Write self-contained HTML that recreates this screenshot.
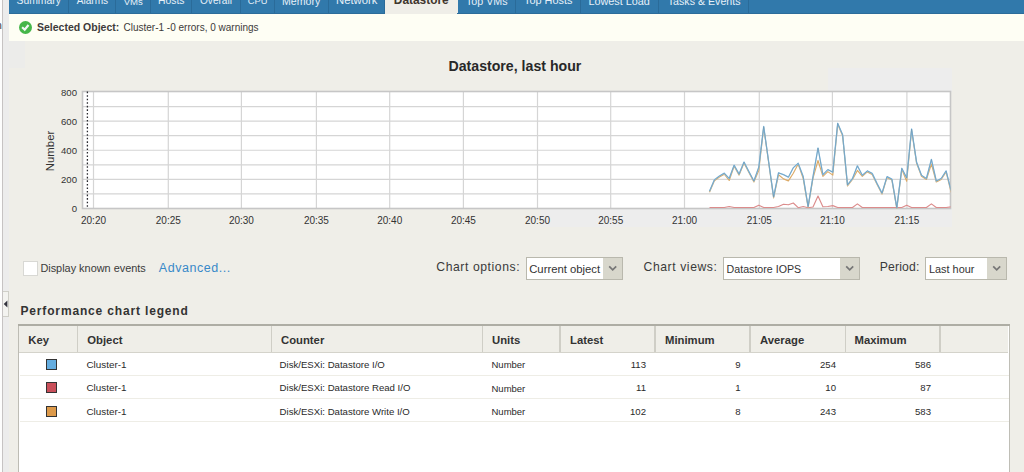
<!DOCTYPE html>
<html><head><meta charset="utf-8">
<style>
html,body{margin:0;padding:0;}
body{width:1024px;height:472px;overflow:hidden;position:relative;background:#efeee8;font-family:"Liberation Sans",sans-serif;color:#333;}
.a{position:absolute;white-space:nowrap;line-height:1;}
#lstrip{position:absolute;left:0;top:0;width:9px;height:472px;background:#ececec;}
#lw{position:absolute;left:0;top:0;width:2px;height:472px;background:#fdfdfd;}
#lline{position:absolute;left:2px;top:0;width:1px;height:472px;background:#c6c3c3;}
#tabbar{position:absolute;left:9px;top:0;width:1015px;height:14px;background:#3179ab;}
.tb2{position:absolute;top:13px;height:1px;background:#2c6c9a;}
.tab{position:absolute;top:0;height:14px;border-right:1px solid #2a6b99;box-sizing:border-box;}
.tab.sel{background:#efeee8;border-right:none;}
.tabt{position:absolute;top:-5.3px;font-size:10.5px;color:#e6f0f8;line-height:1;white-space:nowrap;}
.tabt.selt{font-weight:bold;color:#40362e;font-size:11.9px;top:-5.4px;}
#notif{position:absolute;left:9px;top:14px;width:1015px;height:27px;background:#fefef4;}
#check{position:absolute;left:19px;top:20.7px;width:13px;height:13px;border-radius:50%;background:#46b64a;}
.th{font-size:11.3px;font-weight:bold;color:#333;top:334.5px;}
.td{font-size:9.9px;color:#2a2a2a;}
</style></head><body>
<div id="lstrip"></div><div id="lw"></div><div id="lline"></div>
<div class="a" style="left:-4.3px;top:19.8px;font-size:11px;color:#3a3f4a">n</div>
<div id="tabbar"></div>
<div class="tab" style="left:9px;width:60.1px"></div><div class="tabt" style="left:16.5px;font-size:10.4px;top:-4.10px">Summary</div><div class="tab" style="left:68.6px;width:47.4px"></div><div class="tabt" style="left:76.7px;font-size:10.1px;top:-3.85px">Alarms</div><div class="tab" style="left:115.5px;width:35.6px"></div><div class="tabt" style="left:123.7px;font-size:9.6px;top:-3.43px">VMs</div><div class="tab" style="left:150.6px;width:41.9px"></div><div class="tabt" style="left:158px;font-size:10.4px;top:-4.10px">Hosts</div><div class="tab" style="left:192px;width:48.5px"></div><div class="tabt" style="left:200px;font-size:10.1px;top:-3.85px">Overall</div><div class="tab" style="left:240px;width:34.9px"></div><div class="tabt" style="left:247.8px;font-size:9.3px;top:-3.17px">CPU</div><div class="tab" style="left:274.4px;width:54.4px"></div><div class="tabt" style="left:282px;font-size:10.6px;top:-4.27px">Memory</div><div class="tab" style="left:328.3px;width:56.7px"></div><div class="tabt" style="left:336px;font-size:11.3px;top:-4.87px">Network</div><div class="tab sel" style="left:384.5px;width:73.0px"></div><div class="tabt selt" style="left:393.8px">Datastore</div><div class="tab" style="left:457px;width:59.1px"></div><div class="tabt" style="left:466px;font-size:10.7px;top:-4.36px">Top VMs</div><div class="tab" style="left:515.6px;width:65.5px"></div><div class="tabt" style="left:524px;font-size:10.9px;top:-4.53px">Top Hosts</div><div class="tab" style="left:580.6px;width:78.7px"></div><div class="tabt" style="left:588.4px;font-size:10.85px;top:-4.48px">Lowest Load</div><div class="tab" style="left:658.8px;width:90.1px"></div><div class="tabt" style="left:667.8px;font-size:10.65px;top:-4.32px">Tasks &amp; Events</div>
<div class="tb2" style="left:9px;width:375.5px"></div>
<div class="tb2" style="left:457px;width:567px"></div>
<div id="notif"></div>
<div style="position:absolute;left:9px;top:41px;width:15.5px;height:27px;background:#ececea"></div>
<div id="check"><svg width="13" height="13" viewBox="0 0 13 13" style="position:absolute;left:0;top:0"><path d="M3.1 6.3 L5.7 8.6 L9.5 4.0" fill="none" stroke="#f4f6f8" stroke-width="2.2"/></svg></div>
<div class="a" style="left:37px;top:22px;font-size:10.5px;font-weight:bold;color:#3d3a3a">Selected Object:</div>
<div class="a" style="left:123.5px;top:22.7px;font-size:10px;color:#3d3a3a">Cluster-1 -0 errors, 0 warnings</div>

<div class="a" style="left:448.5px;top:58.7px;font-size:14.15px;font-weight:bold;color:#282828">Datastore, last hour</div>
<div style="position:absolute;left:827.5px;top:68px;width:124.5px;height:24px;background:#ededed"></div>
<div style="position:absolute;left:541px;top:209px;width:411px;height:18px;background:#ededed"></div>

<svg width="1024" height="472" style="position:absolute;left:0;top:0" font-family="Liberation Sans">
<rect x="82.5" y="91.5" width="868" height="117" fill="#fff"/>
<g stroke="#d5d5d5" stroke-width="1.2"><line x1="82.5" x2="950.5" y1="106.56" y2="106.56"/><line x1="82.5" x2="950.5" y1="121.12" y2="121.12"/><line x1="82.5" x2="950.5" y1="135.69" y2="135.69"/><line x1="82.5" x2="950.5" y1="150.25" y2="150.25"/><line x1="82.5" x2="950.5" y1="164.81" y2="164.81"/><line x1="82.5" x2="950.5" y1="179.38" y2="179.38"/><line x1="82.5" x2="950.5" y1="193.94" y2="193.94"/><line x1="93.50" x2="93.50" y1="92" y2="208.5"/><line x1="168.30" x2="168.30" y1="92" y2="208.5"/><line x1="241.40" x2="241.40" y1="92" y2="208.5"/><line x1="316.40" x2="316.40" y1="92" y2="208.5"/><line x1="389.70" x2="389.70" y1="92" y2="208.5"/><line x1="463.40" x2="463.40" y1="92" y2="208.5"/><line x1="537.50" x2="537.50" y1="92" y2="208.5"/><line x1="610.70" x2="610.70" y1="92" y2="208.5"/><line x1="684.50" x2="684.50" y1="92" y2="208.5"/><line x1="759.30" x2="759.30" y1="92" y2="208.5"/><line x1="832.40" x2="832.40" y1="92" y2="208.5"/><line x1="906.90" x2="906.90" y1="92" y2="208.5"/></g>
<rect x="82.5" y="91.5" width="868" height="117" fill="none" stroke="#c6c6c6" stroke-width="1.6"/>
<line x1="87.4" x2="87.4" y1="91.6" y2="208" stroke="#2a2a30" stroke-width="1.3" stroke-dasharray="1.6,1.95"/>
<defs><clipPath id="pc"><rect x="82.5" y="91.5" width="868" height="117"/></clipPath></defs>
<g clip-path="url(#pc)" fill="none" stroke-width="1.15" stroke-linejoin="round">
<polyline points="709.5,207.5 714.4,207.5 719.4,207.5 724.3,207.5 729.2,206.5 734.1,207.5 739.1,207.5 744.0,207.5 748.9,207.5 753.9,207.5 758.8,205.2 763.7,207.5 768.7,207.5 773.6,207.5 778.5,206.5 783.5,204.3 788.4,204.8 793.3,203.0 798.2,207.7 803.2,206.5 808.1,207.7 813.0,207.0 818.0,196.0 822.9,206.8 827.8,206.5 832.8,205.6 837.7,207.5 842.6,207.5 847.5,207.5 852.5,207.5 857.4,203.9 862.3,207.5 867.3,207.5 872.2,207.5 877.1,207.5 882.0,207.5 887.0,207.5 891.9,207.5 896.8,207.5 901.8,207.5 906.7,205.2 911.6,207.5 916.6,207.5 921.5,207.5 926.4,207.5 931.4,203.9 936.3,207.5 941.2,207.5 946.1,207.5 951.1,206.8" stroke="#dc8c8c"/>
<polyline points="709.5,192.2 714.4,180.8 719.4,177.0 724.3,174.2 729.2,180.5 734.1,166.2 739.1,175.1 744.0,163.0 748.9,172.6 753.9,182.0 758.8,170.4 763.7,127.5 768.7,163.0 773.6,197.9 778.5,174.8 783.5,178.9 788.4,180.9 793.3,173.2 798.2,164.1 803.2,178.6 808.1,207.3 813.0,178.1 818.0,160.5 822.9,176.4 827.8,171.6 832.8,175.1 837.7,124.3 842.6,135.7 847.5,185.9 852.5,179.5 857.4,170.4 862.3,176.3 867.3,171.9 872.2,174.4 877.1,184.6 882.0,194.1 887.0,177.6 891.9,180.1 896.8,208.7 901.8,169.3 906.7,181.2 911.6,130.0 916.6,163.3 921.5,176.3 926.4,179.5 931.4,164.0 936.3,182.0 941.2,179.5 946.1,171.9 951.1,192.3" stroke="#dcaa66" stroke-width="1.15"/>
<polyline points="709.5,191.2 714.4,179.8 719.4,176.0 724.3,173.2 729.2,178.5 734.1,165.2 739.1,174.1 744.0,162.0 748.9,171.6 753.9,181.0 758.8,167.1 763.7,126.5 768.7,162.0 773.6,196.9 778.5,172.8 783.5,174.7 788.4,177.2 793.3,167.7 798.2,163.3 803.2,176.6 808.1,206.5 813.0,176.6 818.0,148.0 822.9,174.7 827.8,169.6 832.8,172.2 837.7,123.3 842.6,134.7 847.5,184.9 852.5,178.5 857.4,165.8 862.3,175.3 867.3,170.9 872.2,173.4 877.1,183.6 882.0,193.1 887.0,176.6 891.9,179.1 896.8,207.7 901.8,168.3 906.7,177.9 911.6,129.0 916.6,162.3 921.5,175.3 926.4,178.5 931.4,159.4 936.3,181.0 941.2,178.5 946.1,170.9 951.1,190.6" stroke="#8cc6ec" stroke-width="1.35"/>
<polyline points="709.5,191.2 714.4,179.8 719.4,176.0 724.3,173.2 729.2,178.5 734.1,165.2 739.1,174.1 744.0,162.0 748.9,171.6 753.9,181.0 758.8,167.1 763.7,126.5 768.7,162.0 773.6,196.9 778.5,172.8 783.5,174.7 788.4,177.2 793.3,167.7 798.2,163.3 803.2,176.6 808.1,206.5 813.0,176.6 818.0,148.0 822.9,174.7 827.8,169.6 832.8,172.2 837.7,123.3 842.6,134.7 847.5,184.9 852.5,178.5 857.4,165.8 862.3,175.3 867.3,170.9 872.2,173.4 877.1,183.6 882.0,193.1 887.0,176.6 891.9,179.1 896.8,207.7 901.8,168.3 906.7,177.9 911.6,129.0 916.6,162.3 921.5,175.3 926.4,178.5 931.4,159.4 936.3,181.0 941.2,178.5 946.1,170.9 951.1,190.6" stroke="#6a8fa8" stroke-width="0.6"/>
</g>
<g font-size="10" fill="#333"><text x="93.50" y="223.5" text-anchor="middle">20:20</text><text x="168.30" y="223.5" text-anchor="middle">20:25</text><text x="241.40" y="223.5" text-anchor="middle">20:30</text><text x="316.40" y="223.5" text-anchor="middle">20:35</text><text x="389.70" y="223.5" text-anchor="middle">20:40</text><text x="463.40" y="223.5" text-anchor="middle">20:45</text><text x="537.50" y="223.5" text-anchor="middle">20:50</text><text x="610.70" y="223.5" text-anchor="middle">20:55</text><text x="684.50" y="223.5" text-anchor="middle">21:00</text><text x="759.30" y="223.5" text-anchor="middle">21:05</text><text x="832.40" y="223.5" text-anchor="middle">21:10</text><text x="906.90" y="223.5" text-anchor="middle">21:15</text><text x="77" y="95.50" text-anchor="end" font-size="9.6">800</text><text x="77" y="124.62" text-anchor="end" font-size="9.6">600</text><text x="77" y="153.75" text-anchor="end" font-size="9.6">400</text><text x="77" y="182.88" text-anchor="end" font-size="9.6">200</text><text x="77" y="212.00" text-anchor="end" font-size="9.6">0</text></g>
<text transform="translate(53.5,151) rotate(-90)" text-anchor="middle" font-size="11.4" fill="#333">Number</text>
</svg>

<div style="position:absolute;left:23px;top:261px;width:12.5px;height:12.5px;background:#fff;border:1px solid #d8d8d4;box-sizing:content-box"></div>
<div class="a" style="left:40.4px;top:263px;font-size:10.9px;color:#3a3a3a">Display known events</div>
<div class="a" style="left:158.8px;top:261.8px;font-size:12.5px;letter-spacing:0.54px;color:#3889c8">Advanced...</div>

<div class="a" style="left:436.3px;top:260.8px;font-size:12.2px;letter-spacing:0.57px;color:#3a3a3a">Chart options:</div>
<div style="position:absolute;left:525.5px;top:257px;width:95.5px;height:20.5px;border:1px solid #b9b8ad;background:#fff"></div>
<div style="position:absolute;left:603px;top:258px;width:19px;height:20.5px;background:#d8d7cc"></div>
<div class="a" style="left:529.2px;top:263.8px;font-size:11.3px;color:#333">Current object</div>

<div class="a" style="left:643.5px;top:260.8px;font-size:12.2px;letter-spacing:0.58px;color:#3a3a3a">Chart views:</div>
<div style="position:absolute;left:722.6px;top:257px;width:135.5px;height:20.5px;border:1px solid #b9b8ad;background:#fff"></div>
<div style="position:absolute;left:839.5px;top:258px;width:19px;height:20.5px;background:#d8d7cc"></div>
<div class="a" style="left:726.6px;top:263.8px;font-size:10.65px;color:#333">Datastore IOPS</div>

<div class="a" style="left:879.8px;top:260.8px;font-size:12.2px;letter-spacing:0.16px;color:#3a3a3a">Period:</div>
<div style="position:absolute;left:925.2px;top:257px;width:79.5px;height:20.5px;border:1px solid #b9b8ad;background:#fff"></div>
<div style="position:absolute;left:987px;top:258px;width:18.5px;height:20.5px;background:#d8d7cc"></div>
<div class="a" style="left:929px;top:263.8px;font-size:10.9px;color:#333">Last hour</div>

<svg width="1024" height="472" style="position:absolute;left:0;top:0">
<path d="M609.2 266.3 L612.7 269.8 L616.2 266.3" fill="none" stroke="#767676" stroke-width="1.7"/>
<path d="M846.2 266.3 L849.7 269.8 L853.2 266.3" fill="none" stroke="#767676" stroke-width="1.7"/>
<path d="M993.2 266.3 L996.7 269.8 L1000.2 266.3" fill="none" stroke="#767676" stroke-width="1.7"/>
</svg>

<div style="position:absolute;left:2.5px;top:291px;width:5px;height:23.5px;background:#f3f3f0;border:1px solid #cfcfc8;border-left:none"></div>
<svg width="10" height="20" style="position:absolute;left:0;top:295px"><path d="M3.7 8.9 L7.4 5.4 L7.4 12.4 Z" fill="#33333d"/></svg>

<div class="a" style="left:20.5px;top:304.9px;font-size:12px;letter-spacing:0.84px;font-weight:bold;color:#333">Performance chart legend</div>

<div style="position:absolute;left:18px;top:324px;width:992px;height:148px;background:#fff;border-left:1.3px solid #bdbcb4;border-right:1.5px solid #bfbeb6;box-sizing:border-box"></div>
<div style="position:absolute;left:18px;top:324px;width:992px;height:2px;background:#aeada4"></div>
<div style="position:absolute;left:19.3px;top:326px;width:989px;height:27px;background:#efeee8;border-bottom:1.5px solid #d4d3cb;box-sizing:border-box"></div>
<div style="position:absolute;left:76.5px;top:326px;width:1.5px;height:26px;background:#cfcec6"></div><div style="position:absolute;left:270.6px;top:326px;width:1.5px;height:26px;background:#cfcec6"></div><div style="position:absolute;left:481.5px;top:326px;width:1.5px;height:26px;background:#cfcec6"></div><div style="position:absolute;left:559px;top:326px;width:1.5px;height:26px;background:#cfcec6"></div><div style="position:absolute;left:654.2px;top:326px;width:1.5px;height:26px;background:#cfcec6"></div><div style="position:absolute;left:749.3px;top:326px;width:1.5px;height:26px;background:#cfcec6"></div><div style="position:absolute;left:844.5px;top:326px;width:1.5px;height:26px;background:#cfcec6"></div><div style="position:absolute;left:939px;top:326px;width:1.5px;height:26px;background:#cfcec6"></div><div class="a th" style="left:28.3px">Key</div><div class="a th" style="left:87.3px">Object</div><div class="a th" style="left:281px">Counter</div><div class="a th" style="left:492px">Units</div><div class="a th" style="left:570px">Latest</div><div class="a th" style="left:665px">Minimum</div><div class="a th" style="left:760px">Average</div><div class="a th" style="left:854.5px">Maximum</div>
<div style="position:absolute;left:19.5px;top:374.5px;width:989px;height:1px;background:#eeede6"></div><div style="position:absolute;left:45.8px;top:359.0px;width:9px;height:9px;background:#64ade0;border:1px solid #333"></div><div class="a td" style="left:86.4px;top:359.8px">Cluster-1</div><div class="a td" style="left:279.6px;top:360.0px;font-size:9.62px">Disk/ESXi: Datastore I/O</div><div class="a td" style="left:491.5px;top:360.1px;font-size:9.5px">Number</div><div class="a td" style="right:378px;top:360.0px;font-size:9.6px">113</div><div class="a td" style="right:283.29999999999995px;top:360.0px;font-size:9.6px">9</div><div class="a td" style="right:188px;top:360.0px;font-size:9.6px">254</div><div class="a td" style="right:93px;top:360.0px;font-size:9.6px">586</div><div style="position:absolute;left:19.5px;top:397.9px;width:989px;height:1px;background:#eeede6"></div><div style="position:absolute;left:45.8px;top:382.4px;width:9px;height:9px;background:#c94f5a;border:1px solid #333"></div><div class="a td" style="left:86.4px;top:383.2px">Cluster-1</div><div class="a td" style="left:279.6px;top:383.4px;font-size:9.62px">Disk/ESXi: Datastore Read I/O</div><div class="a td" style="left:491.5px;top:383.5px;font-size:9.5px">Number</div><div class="a td" style="right:378px;top:383.4px;font-size:9.6px">11</div><div class="a td" style="right:283.29999999999995px;top:383.4px;font-size:9.6px">1</div><div class="a td" style="right:188px;top:383.4px;font-size:9.6px">10</div><div class="a td" style="right:93px;top:383.4px;font-size:9.6px">87</div><div style="position:absolute;left:19.5px;top:421.2px;width:989px;height:1px;background:#eeede6"></div><div style="position:absolute;left:45.8px;top:405.7px;width:9px;height:9px;background:#dd9a4a;border:1px solid #333"></div><div class="a td" style="left:86.4px;top:406.5px">Cluster-1</div><div class="a td" style="left:279.6px;top:406.7px;font-size:9.62px">Disk/ESXi: Datastore Write I/O</div><div class="a td" style="left:491.5px;top:406.8px;font-size:9.5px">Number</div><div class="a td" style="right:378px;top:406.7px;font-size:9.6px">102</div><div class="a td" style="right:283.29999999999995px;top:406.7px;font-size:9.6px">8</div><div class="a td" style="right:188px;top:406.7px;font-size:9.6px">243</div><div class="a td" style="right:93px;top:406.7px;font-size:9.6px">583</div>
</body></html>
